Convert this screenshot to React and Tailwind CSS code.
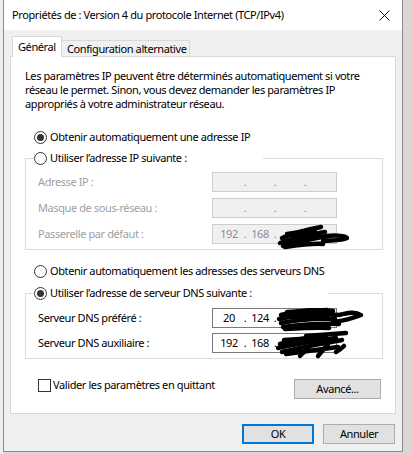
import React from "react";

const FONT = { fontFamily: '"Noto Sans", "Open Sans", sans-serif' };

function Radio({ checked }) {
  return (
    <span className="w-[13px] h-[13px] rounded-full border border-[#333333] bg-white flex items-center justify-center shrink-0">
      {checked && <span className="w-[7px] h-[7px] rounded-full bg-[#333333]" />}
    </span>
  );
}

function Scribble({ kind }) {
  if (kind === 1) {
    return (
      <svg className="absolute left-[66px] top-[0px] overflow-visible" width="72" height="24" viewBox="0 0 72 24">
        <g stroke="#000" strokeWidth="4.5" fill="none" strokeLinecap="round" strokeLinejoin="round">
          <path d="M3 13 C12 9, 26 5, 42 2" />
          <path d="M1 18 C14 13, 28 10, 46 7" />
          <path d="M4 21 C18 17, 32 14, 48 11 C58 10, 68 11, 68 13 C62 16, 52 15, 44 16" />
          <path d="M8 9 L36 5" />
          <path d="M10 16 L40 12" />
          <path d="M6 22 C20 20, 34 18, 44 19" />
          <path d="M14 12 L34 9" />
        </g>
      </svg>
    );
  }
  if (kind === 2) {
    return (
      <svg className="absolute left-[64px] top-[-2px] overflow-visible" width="90" height="24" viewBox="0 0 90 24">
        <g stroke="#000" strokeWidth="4.5" fill="none" strokeLinecap="round" strokeLinejoin="round">
          <path d="M4 8 C18 4, 36 2, 56 4" />
          <path d="M2 12 C20 8, 40 6, 62 8 C70 6, 78 4, 84 8 C74 12, 64 14, 56 15" />
          <path d="M4 16 C20 13, 36 11, 58 12" />
          <path d="M6 20 C22 18, 40 16, 62 17" />
          <path d="M10 5 L50 3" />
          <path d="M8 22 C24 21, 40 20, 52 21" />
          <path d="M12 10 L50 9" />
        </g>
      </svg>
    );
  }
  return (
    <svg className="absolute left-[63px] top-[-2px] overflow-visible" width="80" height="26" viewBox="0 0 80 26">
      <g stroke="#000" strokeWidth="4.5" fill="none" strokeLinecap="round" strokeLinejoin="round">
        <path d="M4 12 C18 8, 34 5, 50 4" />
        <path d="M2 16 C20 12, 38 9, 60 6" />
        <path d="M6 20 C22 16, 40 13, 66 8" />
        <path d="M30 4 L70 1" />
        <path d="M8 8 L40 6" />
        <path d="M10 22 C24 20, 40 18, 62 15" />
        <path d="M24 24 L34 14" />
        <path d="M42 24 L52 12" />
        <path d="M60 20 C64 18, 66 16, 68 14" />
      </g>
    </svg>
  );
}

function IpBox({ parts, disabled, scribble }) {
  const segs = parts || ["", "", "", ""];
  return (
    <div
      className={
        "relative w-[125px] h-[20px] flex items-center pl-[2px] text-[11px] " +
        (disabled
          ? "bg-[#f0f0f0] border border-[#cccccc] text-[#8c8c8c]"
          : "bg-white border border-[#7a7a7a] text-black")
      }
    >
      <span className="w-[28px] text-center">{segs[0]}</span>
      <span className="w-[4px] text-center">.</span>
      <span className="w-[26px] text-center">{segs[1]}</span>
      <span className="w-[4px] text-center">.</span>
      <span className="w-[26px] text-center">{segs[2]}</span>
      <span className="w-[4px] text-center">.</span>
      <span className="w-[26px] text-center">{segs[3]}</span>
      {scribble && <Scribble kind={scribble} />}
    </div>
  );
}

function Row({ label, disabled, children }) {
  return (
    <div className="flex items-center h-[20px] pl-[4px]">
      <span className={"w-[174px] whitespace-nowrap " + (disabled ? "text-[#a0a0a0]" : "text-black")}>{label}</span>
      {children}
    </div>
  );
}

export default function App() {
  return (
    <div className="w-[412px] h-[454px] bg-[#d8d8d8] flex overflow-hidden text-[11px] tracking-[-0.4px] text-black" style={FONT}>
      <div className="w-[3px] h-full bg-[#eeeeee]" />
      <div className="w-[400px] h-[452px] border-x border-b border-[#8a8a8a] bg-[#f0f0f0] flex flex-col shrink-0">
        {/* Title bar */}
        <div className="h-[30px] bg-white flex items-center justify-between pl-[8px] pr-[12px] shrink-0">
          <span className="text-[11px] whitespace-nowrap">Propriétés de : Version 4 du protocole Internet (TCP/IPv4)</span>
          <svg width="11" height="11" viewBox="0 0 11 11">
            <path d="M0.5 0.5 L10.5 10.5 M10.5 0.5 L0.5 10.5" stroke="#111" strokeWidth="1" />
          </svg>
        </div>

        {/* Body */}
        <div className="px-[6px] pt-[6px] flex flex-col">
          {/* Tabs */}
          <div className="flex items-end h-[21px] pl-[2px] relative z-10 mb-[-1px]">
            <div className="w-[50px] h-[21px] bg-white border-x border-t border-[#d9d9d9] pl-[5px] pt-[2px] leading-[15px] whitespace-nowrap">
              Général
            </div>
            <div className="w-[128px] h-[17px] bg-[#f0f0f0] border-r border-t border-b border-[#d9d9d9] pl-[5px] leading-[15px] whitespace-nowrap">
              Configuration alternative
            </div>
          </div>

          {/* Panel */}
          <div className="h-[358px] bg-white border border-[#d9d9d9] flex flex-col">
            <p className="mt-[12px] pl-[14px] leading-[14px] whitespace-nowrap">
              Les paramètres IP peuvent être déterminés automatiquement si votre
              <br />
              réseau le permet. Sinon, vous devez demander les paramètres IP
              <br />
              appropriés à votre administrateur réseau.
            </p>

            <div className="mt-[19px] ml-[23px] h-[14px] flex items-center gap-[3px]">
              <Radio checked />
              <span className="whitespace-nowrap">Obtenir automatiquement une adresse IP</span>
            </div>

            <fieldset className="mt-[7px] ml-[14px] mr-[12px] border border-[#dcdcdc] px-[8px] pb-[5px]">
              <legend className="w-[229px] h-[14px] flex items-center gap-[3px] p-0">
                <Radio />
                <span className="whitespace-nowrap">Utiliser l’adresse IP suivante :</span>
              </legend>
              <div className="mt-[7px] flex flex-col gap-[6px]">
                <Row label="Adresse IP :" disabled>
                  <IpBox disabled />
                </Row>
                <Row label="Masque de sous-réseau :" disabled>
                  <IpBox disabled />
                </Row>
                <Row label="Passerelle par défaut :" disabled>
                  <IpBox disabled parts={["192", "168", "", ""]} scribble={1} />
                </Row>
              </div>
            </fieldset>

            <div className="mt-[14px] ml-[23px] h-[14px] flex items-center gap-[3px]">
              <Radio />
              <span className="whitespace-nowrap">Obtenir automatiquement les adresses des serveurs DNS</span>
            </div>

            <fieldset className="mt-[8px] ml-[14px] mr-[12px] border border-[#dcdcdc] px-[8px] pb-[5px]">
              <legend className="w-[294px] h-[14px] flex items-center gap-[3px] p-0">
                <Radio checked />
                <span className="whitespace-nowrap">Utiliser l’adresse de serveur DNS suivante :</span>
              </legend>
              <div className="mt-[8px] flex flex-col gap-[5px]">
                <Row label="Serveur DNS préféré :">
                  <IpBox parts={["20", "124", "", ""]} scribble={2} />
                </Row>
                <Row label="Serveur DNS auxiliaire :">
                  <IpBox parts={["192", "168", "", ""]} scribble={3} />
                </Row>
              </div>
            </fieldset>

            <div className="mt-[20px] ml-[27px] mr-[14px] h-[20px] flex items-start justify-between">
              <div className="flex items-center gap-[2px] h-[13px]">
                <span className="w-[13px] h-[13px] border border-[#333333] bg-white shrink-0" />
                <span className="whitespace-nowrap">Valider les paramètres en quittant</span>
              </div>
              <button className="w-[87px] h-[20px] bg-[#e1e1e1] border border-[#adadad] flex items-center justify-center">
                Avancé...
              </button>
            </div>
          </div>

          {/* Bottom buttons */}
          <div className="mt-[10px] flex justify-end gap-[9px] pr-[1px]">
            <button className="w-[72px] h-[20px] bg-[#e1e1e1] border-2 border-[#0078d7] flex items-center justify-center">
              OK
            </button>
            <button className="w-[72px] h-[20px] bg-[#e1e1e1] border border-[#adadad] flex items-center justify-center">
              Annuler
            </button>
          </div>
        </div>
      </div>
    </div>
  );
}
